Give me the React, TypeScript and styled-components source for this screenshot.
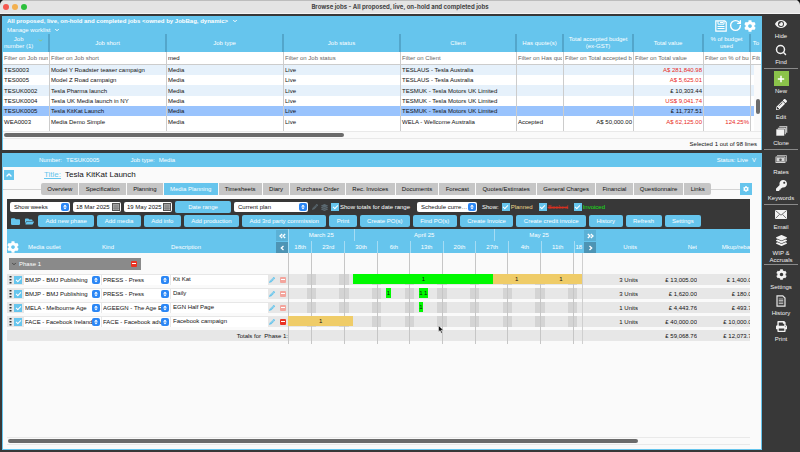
import React from "react";
import styled, { createGlobalStyle, css } from "styled-components";
import { RotateCw, Search, ChevronDown, ChevronUp } from "lucide-react";
import { FaCog, FaEye, FaPencilAlt, FaKey, FaLayerGroup, FaPrint, FaFolder, FaFolderOpen, FaSort } from "react-icons/fa";

const sky = "#66c5ed";
const dark = "#383838";

const GlobalStyle = createGlobalStyle`
  * { box-sizing: border-box; }
  html, body { margin: 0; padding: 0; }
  body { background: #111; color: #111; font: 6px/8px "Liberation Sans", Arial, sans-serif; }
  button, input, select { font: inherit; color: inherit; margin: 0; }
  svg { display: block; flex: none; }
`;

const Window = styled.div`
  min-height: 100vh;
  display: flex;
  flex-direction: column;
  background: ${dark};
  border-radius: 5px 5px 0 0;
  overflow: hidden;
`;

const TitleBar = styled.header`
  height: 14px;
  display: grid;
  grid-template-columns: 40px 1fr 40px;
  align-items: center;
  background: #e4e4e4;
  border-top: 1px solid #bdbdbd;
  border-bottom: 1px solid #f4f4f4;
  h1 {
    margin: 0;
    text-align: center;
    color: #444;
    font: 700 6px/10px Inter, sans-serif;
  }
`;

const Lights = styled.div`
  display: flex;
  gap: 3px;
  padding-left: 3px;
`;

const Light = styled.i<{ $color: string }>`
  width: 6px;
  height: 6px;
  border-radius: 50%;
  background: ${(p) => p.$color};
`;

const Body = styled.div`
  flex: 1;
  display: flex;
  padding: 2px;
`;

const Main = styled.main`
  flex: 1;
  min-width: 0;
  display: flex;
  flex-direction: column;
  gap: 3px;
`;

const Panel = styled.section<{ $grow?: boolean }>`
  background: #fafafa;
  border: solid ${sky};
  border-width: 0 1px;
  display: flex;
  flex-direction: column;
  ${(p) => p.$grow && css`flex: 1; border-bottom-width: 1px;`}
`;

/* Job browser */

const BrowserHead = styled.div`
  height: 18px;
  display: flex;
  justify-content: space-between;
  background: ${sky};
  color: #fff;
  padding: 1px 5px 0 4px;
`;

const HeadMenus = styled.div`
  display: flex;
  flex-direction: column;
  align-items: flex-start;
`;

const MenuButton = styled.button<{ $bold?: boolean }>`
  display: flex;
  align-items: center;
  gap: 4px;
  height: 9px;
  padding: 0;
  border: 0;
  background: none;
  color: #fff;
  white-space: nowrap;
  font-weight: ${(p) => (p.$bold ? 700 : 400)};
`;

const HeadTools = styled.div`
  display: flex;
  gap: 2px;
`;

const IconButton = styled.button`
  display: flex;
  align-items: center;
  justify-content: center;
  padding: 0;
  border: 0;
  background: none;
  color: #fff;
`;

const TableWrap = styled.div`
  position: relative;
  overflow: hidden;
  flex: none;
`;

const JobTable = styled.table`
  width: 100%;
  table-layout: fixed;
  border-collapse: separate;
  border-spacing: 0;
  th, td {
    padding: 0 1px;
    overflow: hidden;
    white-space: nowrap;
    border-right: 1px solid #ccc;
  }
  td:last-child, th:last-child { border-right: 0; }
`;

const HeadCell = styled.th`
  && { border-right: 2px solid #53a6cb; white-space: normal; }
  &&:last-child { border-right: 0; }
  height: 18px;
  background: ${sky};
  color: #fff;
  font-weight: 400;
  line-height: 7px;
`;

const SortLabel = styled.span`
  display: flex;
  align-items: flex-start;
  justify-content: space-between;
  padding-right: 4px;
  white-space: pre-line;
  svg { color: #9fc65a; margin-top: 2px; }
`;

const FilterCell = styled.td`
  height: 13px;
  background: #fff;
  border-bottom: 1px solid #ccc;
`;

const FilterInput = styled.input`
  display: block;
  width: 100%;
  height: 10px;
  padding: 0;
  border: 0;
  background: none;
  outline: 0;
  &::placeholder { color: #666; opacity: 1; }
`;

const JobRow = styled.tr<{ $selected?: boolean }>`
  height: 10px;
  background: #fff;
  &:nth-child(odd) { background: #e6f1fb; }
  &:nth-child(3n) { height: 11px; }
  ${(p) => p.$selected && css`&&& { background: #99c3fd; }`}
`;

const BlankRow = styled.tr`
  height: 4px;
  background: #fff;
`;

const JobCell = styled.td<{ $right?: boolean; $red?: boolean }>`
  text-align: ${(p) => (p.$right ? "right" : "left")};
  color: ${(p) => (p.$red ? "#e8291c" : "#111")};
`;

const VScroll = styled.div`
  position: absolute;
  top: 31px;
  right: 0;
  bottom: 0;
  width: 7px;
  background: #fafafa;
  padding: 34px 1px 0 2px;
  &::after {
    content: "";
    display: block;
    height: 15px;
    border-radius: 2px;
    background: #6b6b6b;
  }
`;

const HScroll = styled.div<{ $part: number }>`
  height: 8px;
  flex: none;
  padding: 1px;
  border: solid #e9e9e9;
  border-width: 1px 0;
  &::after {
    content: "";
    display: block;
    width: ${(p) => p.$part}%;
    height: 4px;
    border-radius: 2px;
    background: #6b6b6b;
  }
`;

const SelectionInfo = styled.div`
  height: 11px;
  padding: 1px 4px 0 0;
  text-align: right;
`;

/* Job detail */

const JobBar = styled.div`
  height: 14px;
  display: flex;
  align-items: center;
  gap: 31px;
  padding: 0 5px 0 36px;
  background: ${sky};
  color: #fff;
  flex: none;
`;

const Pair = styled.span<{ $end?: boolean }>`
  display: flex;
  gap: 4px;
  margin-left: ${(p) => (p.$end ? "auto" : "0")};
`;

const TitleRow = styled.div`
  height: 16px;
  display: flex;
  align-items: center;
  gap: 4px;
  padding-left: 1px;
  font-size: 8px;
  a { color: ${sky}; margin-left: 26px; }
`;

const SkyButton = styled.button<{ $size: number }>`
  width: ${(p) => p.$size}px;
  height: ${(p) => p.$size}px;
  display: flex;
  align-items: center;
  justify-content: center;
  padding: 0;
  border: 0;
  background: ${sky};
  color: #fff;
`;

const TabBar = styled.nav`
  display: flex;
  align-items: center;
  padding-right: 9px;
  flex: none;
`;

const Rule = styled.i<{ $width: number }>`
  flex: 0 0 ${(p) => p.$width}px;
  height: 1px;
  background: #d4d4d4;
`;

const Tabs = styled.div`
  flex: 1;
  display: flex;
  gap: 1px;
  border-radius: 2px;
  overflow: hidden;
`;

const Tab = styled.button<{ $active?: boolean }>`
  flex: 1 1 auto;
  height: 12px;
  padding: 0;
  border: 0;
  background: ${(p) => (p.$active ? sky : "#c6c6c6")};
  color: ${(p) => (p.$active ? "#fff" : "#111")};
  white-space: nowrap;
`;

const Plan = styled.div`
  flex: 1;
  display: flex;
  flex-direction: column;
  margin: 4px 11px 4px 4px;
  overflow: hidden;
`;

const Toolbar = styled.div`
  display: flex;
  flex-direction: column;
  gap: 2px;
  padding: 2px 3px;
  background: ${dark};
  color: #fff;
`;

const ToolRow = styled.div`
  display: flex;
  align-items: center;
  gap: 3px;
  height: 12px;
`;

const ActionRow = styled.div`
  display: flex;
  align-items: center;
  gap: 3px;
  padding-right: 46px;
`;

const FolderButton = styled(IconButton)`
  width: 11px;
  color: ${sky};
`;

const ActionButton = styled.button<{ $width?: number }>`
  flex: ${(p) => (p.$width ? `0 0 ${p.$width}px` : "1 1 auto")};
  height: 12px;
  padding: 0;
  border: 0;
  border-radius: 2px;
  background: ${sky};
  color: #fff;
  white-space: nowrap;
`;

const Picker = styled.span<{ $width: number }>`
  position: relative;
  flex: 0 0 ${(p) => p.$width}px;
  height: 10px;
  select, input {
    display: block;
    width: 100%;
    height: 10px;
    padding: 0 9px 0 4px;
    border: 0;
    border-radius: 2px;
    outline: 0;
    background: #fff;
    color: #111;
    appearance: none;
    text-overflow: ellipsis;
  }
  input { padding-left: 3px; }
`;

const Stepper = styled.i`
  position: absolute;
  top: 1px;
  right: 1px;
  width: 8px;
  height: 8px;
  display: flex;
  align-items: center;
  justify-content: center;
  border-radius: 2px;
  background: #2a86f5;
  color: #fff;
  pointer-events: none;
`;

const DateIcon = styled.i`
  position: absolute;
  top: 1px;
  right: 1px;
`;

const Check = styled.input`
  appearance: none;
  display: flex;
  flex: none;
  width: 8px;
  height: 8px;
  background: ${sky};
  &:checked::after {
    content: "";
    width: 2px;
    height: 4px;
    margin: 1px auto;
    border: solid #fff;
    border-width: 0 1px 1px 0;
    transform: rotate(45deg);
  }
`;

const CheckLabel = styled.label<{ $color?: string; $struck?: boolean; $width: number }>`
  display: flex;
  align-items: center;
  gap: 1px;
  flex: 0 0 ${(p) => p.$width}px;
  white-space: nowrap;
  color: ${(p) => p.$color || "#fff"};
  text-decoration: ${(p) => (p.$struck ? "line-through" : "none")};
`;

const ShowLabel = styled.span`
  margin-left: 2px;
`;

const Dim = styled(IconButton)`
  width: 7px;
  color: #5a6870;
`;

/* Schedule */

const Schedule = styled.div`
  position: relative;
  flex: 1;
`;

const PlanTable = styled.table`
  width: 100%;
  table-layout: fixed;
  border-collapse: separate;
  border-spacing: 0;
  th, td { padding: 0; white-space: nowrap; overflow: hidden; }
`;

const PlanHead = styled.th`
  height: 24px;
  background: ${sky};
  color: #fff;
  font-weight: 400;
  text-align: left;
  vertical-align: bottom;
`;

const HeadText = styled.span<{ $end?: boolean; $inset?: boolean; $overrun?: boolean }>`
  display: flex;
  align-items: center;
  justify-content: ${(p) => (p.$end ? "flex-end" : "flex-start")};
  height: 12px;
  padding-left: ${(p) => (p.$inset ? 4 : 0)}px;
  margin-right: ${(p) => (p.$overrun ? -5 : 0)}px;
`;

const UnitsHead = styled.div`
  display: flex;
  justify-content: space-between;
  align-items: flex-end;
  padding: 0 1px;
`;

const Pager = styled.div<{ $left?: boolean }>`
  display: flex;
  flex-direction: column;
  gap: 1px;
  width: 12px;
  margin-left: ${(p) => (p.$left ? "0" : "auto")};
`;

const PagerButton = styled.button<{ $deep?: boolean }>`
  height: 11px;
  padding: 0;
  border: 0;
  display: flex;
  align-items: center;
  justify-content: center;
  background: ${(p) => (p.$deep ? "#4d94b4" : "#5bb1d6")};
  color: #fff;
`;

const Track = styled.div<{ $height: number }>`
  display: grid;
  grid-template-columns: repeat(63, 1fr);
  height: ${(p) => p.$height}px;
  border-right: 1px solid #cfcfcf;
`;

const Scale = styled.div`
  display: grid;
  grid-template-columns: repeat(63, 1fr);
  grid-template-rows: 12px 12px;
`;

const ScaleCell = styled.span<{ $from: number; $days: number; $row: number }>`
  grid-row: ${(p) => p.$row};
  grid-column: ${(p) => p.$from + 1} / span ${(p) => p.$days};
  display: flex;
  align-items: center;
  justify-content: center;
  min-width: 0;
  border-left: 1px solid #a5dcf4;
`;

const Weekend = styled.i<{ $from: number; $days: number }>`
  grid-row: 1;
  grid-column: ${(p) => p.$from + 1} / span ${(p) => p.$days};
  height: 11px;
  background: #d4d4d4;
`;

const WeekLine = styled.i<{ $from: number }>`
  grid-row: 1;
  grid-column: ${(p) => p.$from + 1};
  border-left: 1px solid #c6c6c6;
`;

const Bar = styled.span<{ $from: number; $days: number; $color: string }>`
  grid-row: 1;
  grid-column: ${(p) => p.$from + 1} / span ${(p) => p.$days};
  height: 10px;
  display: flex;
  align-items: center;
  justify-content: center;
  min-width: 0;
  background: ${(p) => p.$color};
  color: #111;
  z-index: 1;
`;

const PlanRow = styled.tr`
  td {
    height: 14px;
    vertical-align: top;
    background: linear-gradient(#e7e7e7 11px, #fafafa 11px);
  }
`;

const Slot = styled.div<{ $end?: boolean }>`
  display: flex;
  align-items: center;
  justify-content: ${(p) => (p.$end ? "flex-end" : "flex-start")};
  gap: 2px;
  height: 11px;
`;

const Overrun = styled(Slot)`
  margin-right: -5px;
`;

const CellPicker = styled.span`
  position: relative;
  display: block;
  width: 100%;
  margin-right: 1px;
  select {
    display: block;
    width: 100%;
    height: 10px;
    padding: 0 8px 0 1px;
    border: 0;
    outline: 0;
    border-radius: 0;
    background: #fff;
    color: #111;
    appearance: none;
    overflow: hidden;
  }
`;

const DescInput = styled.input`
  width: 100%;
  height: 10px;
  padding: 0 2px 1px;
  border: 0;
  outline: 0;
  background: #fff;
`;

const RowIcon = styled(IconButton)<{ $color: string }>`
  width: 8px;
  color: ${(p) => p.$color};
`;

const Handle = styled(Slot)`
  padding-left: 2px;
`;

const Actions = styled(Slot)`
  gap: 4px;
`;

const Remove = styled.button<{ $faded?: boolean }>`
  width: 6px;
  height: 6px;
  padding: 0 1px;
  border: 0;
  border-radius: 1px;
  background: ${(p) => (p.$faded ? "#f3a59d" : "#ea3323")};
  &::after {
    content: "";
    display: block;
    height: 1px;
    background: #fff;
  }
`;

const PhaseCell = styled.td`
  height: 21px;
`;

const Phase = styled.div`
  display: flex;
  align-items: center;
  gap: 2px;
  width: 132px;
  height: 12px;
  margin-left: 2px;
  padding: 0 4px 0 2px;
  background: #8a8a8a;
  color: #fff;
  ${Remove} { margin-left: auto; }
`;

const Pointer = styled.svg`
  position: absolute;
  left: 58%;
  top: 96px;
  z-index: 2;
`;

/* Side rail */

const Rail = styled.aside`
  flex: 0 0 36px;
  display: flex;
  flex-direction: column;
  color: #f2f2f2;
`;

const RailGroup = styled.div`
  display: flex;
  flex-direction: column;
  margin: 0 0 0 2px;
  & + & { border-top: 1px solid #8a8a8a; padding-top: 2px; }
`;

const RailButton = styled.button`
  display: flex;
  flex-direction: column;
  align-items: center;
  min-height: 26px;
  padding: 0;
  border: 0;
  background: none;
  color: #f2f2f2;
  line-height: 7px;
`;

const RailIcon = styled.span<{ $green?: boolean }>`
  width: 15px;
  height: 15px;
  margin-bottom: 2px;
  display: flex;
  align-items: center;
  justify-content: center;
  background: ${(p) => (p.$green ? "#8bc34a" : "none")};
`;

const SaveIcon = () => (
  <svg width="12" height="12" viewBox="0 0 12 12" fill="none" stroke="currentColor">
    <path d="M.8.8h9l1.400 1.400v9H.8z" strokeWidth="1.200" />
    <path d="M3 1v3.200h6V1M2.500 6.500h7M2.500 8.500h7M5 2.500h3" />
  </svg>
);

const CloneIcon = () => (
  <svg width="13" height="12" viewBox="0 0 13 12" fill="currentColor" stroke={dark} strokeWidth=".6">
    <rect x="4" y="1" width="8.500" height="7" />
    <rect x="2.500" y="2.500" width="8.500" height="7" />
    <rect x="1" y="4" width="8.500" height="7" />
  </svg>
);

const RatesIcon = () => (
  <svg width="12" height="9" viewBox="0 0 12 9">
    <path d="M2 .5h9.500v6" fill="none" stroke="#aaa" />
    <rect x=".5" y="1.500" width="10" height="6.500" rx=".5" fill="#d6d6d6" />
    <rect x="1.500" y="2.700" width="8" height="4" fill="none" stroke="#777" strokeWidth=".6" />
    <circle cx="5.500" cy="4.700" r="1.300" fill="#555" />
  </svg>
);

const MailIcon = () => (
  <svg width="12" height="9" viewBox="0 0 12 9">
    <rect width="12" height="9" rx=".6" fill="#f2f2f2" />
    <path d="M.6.7 6 5.200 11.400.7M.6 8.400l3.900-4M11.400 8.400l-3.900-4" fill="none" stroke="#555" strokeWidth=".8" />
  </svg>
);

const DocIcon = () => (
  <svg width="10" height="12" viewBox="0 0 10 12">
    <path d="M1 .8h5.800L9 3v8.200H1z" fill="#444" stroke="#e6e6e6" strokeWidth="1.200" />
    <path d="M2.800 4h4.400M2.800 5.500h4.400M2.800 7h4.400M2.800 8.500h4.400" stroke="#bbb" strokeWidth=".9" />
  </svg>
);

const PlusIcon = () => (
  <svg width="8" height="8" viewBox="0 0 8 8">
    <path d="M4 .8v6.400M.8 4h6.400" stroke="#fff" strokeWidth="1.500" />
  </svg>
);

const CalendarIcon = () => (
  <svg width="8" height="8" viewBox="0 0 8 8">
    <rect x=".5" y=".5" width="7" height="7" fill="#bbb" stroke="#555" />
    <path d="M1 2h6M1 4h6M1 5.700h6M3 2v5M5 2v5" stroke="#666" strokeWidth=".6" />
  </svg>
);

const GripIcon = () => (
  <svg width="3" height="8" viewBox="0 0 3 8" fill="#333">
    <rect x=".5" width="2" height="1.500" />
    <rect x=".5" y="3" width="2" height="1.500" />
    <rect x=".5" y="6" width="2" height="1.500" />
  </svg>
);

const Chevrons = ({ count, back }: { count: number; back?: boolean }) => (
  <svg width="7" height="6" viewBox="0 0 7 6" fill="none" stroke="#fff" strokeWidth="1.300">
    <g transform={back ? "rotate(180 3.500 3)" : undefined}>
      {count === 2 ? <path d="M.8 1 3 3 .8 5M3.800 1 6 3 3.800 5" /> : <path d="M2.500 1l2.200 2-2.200 2" />}
    </g>
  </svg>
);

const columns: { label: string; filter: string; width?: number; value?: string }[] = [
  { label: "Job\nnumber (1)", filter: "Filter on Job number", width: 47 },
  { label: "Job short", filter: "Filter on Job short", width: 117 },
  { label: "Job type", filter: "Filter on Job type", width: 117, value: "med" },
  { label: "Job status", filter: "Filter on Job status", width: 117 },
  { label: "Client", filter: "Filter on Client" },
  { label: "Has quote(s)", filter: "Filter on Has quote(s)", width: 47 },
  { label: "Total accepted budget (ex-GST)", filter: "Filter on Total accepted budget", width: 70 },
  { label: "Total value", filter: "Filter on Total value", width: 70 },
  { label: "% of budget used", filter: "Filter on % of budget used", width: 47 },
  { label: "To", filter: "Filter on To", width: 10 },
];

const jobs = [
  ["TES0003", "Model Y Roadster teaser campaign", "TESLAUS - Tesla Australia", "", "", "A$ 281,840.98", ""],
  ["TES0005", "Model Z Road campaign", "TESLAUS - Tesla Australia", "", "", "A$ 5,625.01", ""],
  ["TESUK0002", "Tesla Pharma launch", "TESMUK - Tesla Motors UK Limited", "", "", "£ 10,303.44", ""],
  ["TESUK0004", "Tesla UK Media launch in NY", "TESMUK - Tesla Motors UK Limited", "", "", "US$ 9,041.74", ""],
  ["TESUK0005", "Tesla KitKat Launch", "TESMUK - Tesla Motors UK Limited", "", "", "£ 11,737.51", ""],
  ["WEA0003", "Media Demo Simple", "WELA - Wellcome Australia", "Accepted", "A$ 50,000.00", "A$ 62,125.00", "124.25%"],
];

const tabs = [
  "Overview", "Specification", "Planning", "Media Planning", "Timesheets", "Diary", "Purchase Order",
  "Rec. Invoices", "Documents", "Forecast", "Quotes/Estimates", "General Charges", "Financial",
  "Questionnaire", "Links",
];

const actions = [
  "Add new phase", "Add media", "Add info", "Add production", "Add 3rd party commission", "Print",
  "Create PO(s)", "Find PO(s)", "Create Invoice", "Create credit invoice", "History", "Refresh", "Settings",
];

const months = [
  { label: "March 25", from: 0, days: 14 },
  { label: "April 25", from: 14, days: 30 },
  { label: "May 25", from: 44, days: 19 },
];

const weeks = [
  { label: "18th", from: 0, days: 5 },
  { label: "23rd", from: 5, days: 7 },
  { label: "30th", from: 12, days: 7 },
  { label: "6th", from: 19, days: 7 },
  { label: "13th", from: 26, days: 7 },
  { label: "20th", from: 33, days: 7 },
  { label: "27th", from: 40, days: 7 },
  { label: "4th", from: 47, days: 7 },
  { label: "11th", from: 54, days: 7 },
  { label: "18", from: 61, days: 2 },
];

const green = "#00f900";
const amber = "#efcc68";

const lines = [
  {
    outlet: "BMJP - BMJ Publishing", kind: "PRESS - Press", text: "Kit Kat", units: "3 Units",
    net: "£ 13,005.00", markup: "£ 1,400.00", faded: true,
    bars: [[14, 30, green], [44, 10, amber], [54, 9, amber]],
  },
  {
    outlet: "BMJP - BMJ Publishing", kind: "PRESS - Press", text: "Daily", units: "3 Units",
    net: "£ 1,620.00", markup: "£ 180.00", faded: true,
    bars: [[21, 1, green], [28, 1, green], [29, 1, green]],
  },
  {
    outlet: "MELA - Melbourne Age", kind: "AGEEGN - The Age EGN", text: "EGN Half Page", units: "1 Units",
    net: "£ 4,443.76", markup: "£ 493.75", faded: true,
    bars: [[28, 1, green]],
  },
  {
    outlet: "FACE - Facebook Ireland", kind: "FACE - Facebook advert", text: "Facebook campaign", units: "1 Units",
    net: "£ 40,000.00", markup: "£ 10,000.00", faded: false,
    bars: [[0, 14, amber]],
  },
] as const;

const Timeline = ({ bars = [], shaded, height = 14 }: { bars?: readonly (readonly [number, number, string])[]; shaded?: boolean; height?: number }) => (
  <Track $height={height}>
    {shaded && weeks.slice(1).map((w) => <Weekend key={w.from} $from={w.from - 1} $days={2} />)}
    {weeks.map((w) => <WeekLine key={w.from} $from={w.from} />)}
    {bars.map(([from, days, color]) => (
      <Bar key={from} $from={from} $days={days} $color={color}>1</Bar>
    ))}
  </Track>
);

const Browser = () => (
  <Panel>
    <BrowserHead>
      <HeadMenus>
        <MenuButton $bold>
          All proposed, live, on-hold and completed jobs &lt;owned by JobBag, dynamic&gt;
          <ChevronDown size={6} strokeWidth={4} />
        </MenuButton>
        <MenuButton>
          Manage worklist
          <ChevronDown size={6} strokeWidth={4} />
        </MenuButton>
      </HeadMenus>
      <HeadTools>
        <IconButton aria-label="Save"><SaveIcon /></IconButton>
        <IconButton aria-label="Reload"><RotateCw size={13} strokeWidth={2.5} /></IconButton>
        <IconButton aria-label="Worklist settings"><FaCog size={12} /></IconButton>
      </HeadTools>
    </BrowserHead>
    <TableWrap>
      <JobTable>
        <colgroup>
          {columns.map((c) => <col key={c.label} width={c.width} />)}
        </colgroup>
        <thead>
          <tr>
            {columns.map((c, i) => (
              <HeadCell key={c.label}>
                {i === 0 ? <SortLabel><span>{c.label}</span><ChevronDown size={5} strokeWidth={4} /></SortLabel> : c.label}
              </HeadCell>
            ))}
          </tr>
          <tr>
            {columns.map((c) => (
              <FilterCell key={c.label}>
                <FilterInput aria-label={c.filter} placeholder={c.filter} defaultValue={c.value} />
              </FilterCell>
            ))}
          </tr>
        </thead>
        <tbody>
          {jobs.map(([no, short, client, quotes, budget, total, used]) => (
            <JobRow key={no} $selected={no === "TESUK0005"}>
              <JobCell>{no}</JobCell>
              <JobCell>{short}</JobCell>
              <JobCell>Media</JobCell>
              <JobCell>Live</JobCell>
              <JobCell>{client}</JobCell>
              <JobCell>{quotes}</JobCell>
              <JobCell $right>{budget}</JobCell>
              <JobCell $right $red={!total.startsWith("£")}>{total}</JobCell>
              <JobCell $right $red>{used}</JobCell>
              <JobCell />
            </JobRow>
          ))}
          <BlankRow>{columns.map((c) => <td key={c.label} />)}</BlankRow>
        </tbody>
      </JobTable>
      <VScroll />
    </TableWrap>
    <HScroll $part={45} />
    <SelectionInfo>Selected 1 out of 98 lines</SelectionInfo>
  </Panel>
);

const Select = ({ width, label, value }: { width: number; label: string; value: string }) => (
  <Picker $width={width}>
    <select aria-label={label}><option>{value}</option></select>
    <Stepper><FaSort size={6} /></Stepper>
  </Picker>
);

const DateField = ({ label, value }: { label: string; value: string }) => (
  <Picker $width={48}>
    <input aria-label={label} defaultValue={value} />
    <DateIcon><CalendarIcon /></DateIcon>
  </Picker>
);

const CellSelect = ({ label, value }: { label: string; value: string }) => (
  <CellPicker>
    <select aria-label={label}><option>{value}</option></select>
    <Stepper><FaSort size={6} /></Stepper>
  </CellPicker>
);

const PlanToolbar = () => (
  <Toolbar>
    <ToolRow>
      <Select width={60} label="Scale" value="Show weeks" />
      <DateField label="From" value="18 Mar 2025" />
      <DateField label="To" value="19 May 2025" />
      <ActionButton $width={56}>Date range</ActionButton>
      <Select width={74} label="Plan" value="Current plan" />
      <Dim aria-label="Edit plan"><FaPencilAlt size={6} /></Dim>
      <Dim aria-label="Plan layers"><FaLayerGroup size={7} /></Dim>
      <CheckLabel $width={83}><Check type="checkbox" defaultChecked />Show totals for date range</CheckLabel>
      <Select width={60} label="Currency" value="Schedule currency" />
      <ShowLabel>Show:</ShowLabel>
      <CheckLabel $width={34} $color="#efd58c"><Check type="checkbox" defaultChecked />Planned</CheckLabel>
      <CheckLabel $width={32} $color="#d8301f" $struck><Check type="checkbox" defaultChecked />Booked</CheckLabel>
      <CheckLabel $width={34} $color="#16e016"><Check type="checkbox" defaultChecked />Invoiced</CheckLabel>
    </ToolRow>
    <ActionRow>
      <FolderButton aria-label="Close folders"><FaFolder size={9} /></FolderButton>
      <FolderButton aria-label="Open folders"><FaFolderOpen size={9} /></FolderButton>
      {actions.map((a) => <ActionButton key={a}>{a}</ActionButton>)}
    </ActionRow>
  </Toolbar>
);

const PlanSchedule = () => (
  <Schedule>
    <PlanTable>
      <colgroup>
        <col width={17} />
        <col width={78} />
        <col width={69} />
        <col width={97} />
        <col width={20} />
        <col />
        <col width={55} />
        <col width={59} />
        <col width={53} />
      </colgroup>
      <thead>
        <tr>
          <PlanHead><IconButton aria-label="Schedule settings"><FaCog size={12} /></IconButton></PlanHead>
          <PlanHead><HeadText $inset>Media outlet</HeadText></PlanHead>
          <PlanHead><HeadText>Kind</HeadText></PlanHead>
          <PlanHead><HeadText>Description</HeadText></PlanHead>
          <PlanHead>
            <Pager>
              <PagerButton aria-label="First weeks"><Chevrons count={2} back /></PagerButton>
              <PagerButton $deep aria-label="Earlier weeks"><Chevrons count={1} back /></PagerButton>
            </Pager>
          </PlanHead>
          <PlanHead>
            <Scale>
              {months.map((m) => <ScaleCell key={m.label} $row={1} $from={m.from} $days={m.days}>{m.label}</ScaleCell>)}
              {weeks.map((w) => <ScaleCell key={w.label} $row={2} $from={w.from} $days={w.days}>{w.label}</ScaleCell>)}
            </Scale>
          </PlanHead>
          <PlanHead>
            <UnitsHead>
              <Pager $left>
                <PagerButton aria-label="Last weeks"><Chevrons count={2} /></PagerButton>
                <PagerButton $deep aria-label="Later weeks"><Chevrons count={1} /></PagerButton>
              </Pager>
              <HeadText>Units</HeadText>
            </UnitsHead>
          </PlanHead>
          <PlanHead><HeadText $end>Net</HeadText></PlanHead>
          <PlanHead><HeadText $end $overrun>Mkup/rebate</HeadText></PlanHead>
        </tr>
      </thead>
      <tbody>
        <tr>
          <PhaseCell colSpan={5}>
            <Phase>
              <ChevronDown size={6} strokeWidth={3} color="#333" />
              Phase 1
              <Remove aria-label="Remove phase" />
            </Phase>
          </PhaseCell>
          <td><Timeline height={21} /></td>
          <td colSpan={3} />
        </tr>
        {lines.map((l) => (
          <PlanRow key={l.text}>
            <td>
              <Handle>
                <GripIcon />
                <Check type="checkbox" defaultChecked aria-label={`Select ${l.text}`} />
              </Handle>
            </td>
            <td><Slot><CellSelect label="Media outlet" value={l.outlet} /></Slot></td>
            <td><Slot><CellSelect label="Kind" value={l.kind} /></Slot></td>
            <td><Slot><DescInput aria-label="Description" defaultValue={l.text} /></Slot></td>
            <td>
              <Actions>
                <RowIcon $color={sky} aria-label="Edit line"><FaPencilAlt size={6} /></RowIcon>
                <Remove $faded={l.faded} aria-label="Remove line" />
              </Actions>
            </td>
            <td><Timeline shaded bars={l.bars} /></td>
            <td><Slot $end>{l.units}</Slot></td>
            <td><Slot $end>{l.net}</Slot></td>
            <td><Overrun $end>{l.markup}</Overrun></td>
          </PlanRow>
        ))}
        <PlanRow>
          <td colSpan={5}><Slot $end>Totals for&nbsp; Phase 1:</Slot></td>
          <td><Timeline /></td>
          <td />
          <td><Slot $end>£ 59,068.76</Slot></td>
          <td><Overrun $end>£ 12,073.75</Overrun></td>
        </PlanRow>
      </tbody>
    </PlanTable>
    <Pointer width="6" height="9" viewBox="0 0 6 9">
      <path d="M.5.5v6.500l1.600-1.400 1.100 2.600 1.200-.5-1.100-2.500h2.200z" fill="#111" stroke="#fff" strokeWidth=".5" />
    </Pointer>
  </Schedule>
);

const Detail = () => (
  <Panel $grow>
    <JobBar>
      <Pair><span>Number:</span><span>TESUK0005</span></Pair>
      <Pair><span>Job type:</span><span>Media</span></Pair>
      <Pair $end><span>Status: Live</span><span>V</span></Pair>
    </JobBar>
    <TitleRow>
      <SkyButton $size={10} aria-label="Collapse"><ChevronUp size={8} strokeWidth={4} /></SkyButton>
      <a href="#title">Title:</a>
      <span>Tesla KitKat Launch</span>
    </TitleRow>
    <TabBar>
      <Rule $width={38} />
      <Tabs>
        {tabs.map((t) => <Tab key={t} $active={t === "Media Planning"}>{t}</Tab>)}
      </Tabs>
      <Rule $width={29} />
      <SkyButton $size={12} aria-label="Tab settings"><FaCog size={6} /></SkyButton>
    </TabBar>
    <Plan>
      <PlanToolbar />
      <PlanSchedule />
      <HScroll $part={85} />
    </Plan>
  </Panel>
);

const rail = [
  [
    { label: "Hide", icon: <FaEye size={12} /> },
    { label: "Find", icon: <Search size={12} strokeWidth={3} /> },
  ],
  [
    { label: "New", icon: <PlusIcon />, green: true },
    { label: "Edit", icon: <FaPencilAlt size={11} /> },
    { label: "Clone", icon: <CloneIcon /> },
  ],
  [
    { label: "Rates", icon: <RatesIcon /> },
    { label: "Keywords", icon: <FaKey size={11} /> },
  ],
  [
    { label: "Email", icon: <MailIcon /> },
    { label: "WIP & Accruals", icon: <FaLayerGroup size={11} /> },
  ],
  [
    { label: "Settings", icon: <FaCog size={11} /> },
    { label: "History", icon: <DocIcon /> },
    { label: "Print", icon: <FaPrint size={11} /> },
  ],
];

export default function App() {
  return (
    <Window>
      <GlobalStyle />
      <TitleBar>
        <Lights>
          <Light $color="#f5584f" />
          <Light $color="#f3b04f" />
          <Light $color="#2cc03c" />
        </Lights>
        <h1>Browse jobs - All proposed, live, on-hold and completed jobs</h1>
      </TitleBar>
      <Body>
        <Main>
          <Browser />
          <Detail />
        </Main>
        <Rail>
          {rail.map((group) => (
            <RailGroup key={group[0].label}>
              {group.map((item) => (
                <RailButton key={item.label}>
                  <RailIcon $green={"green" in item}>{item.icon}</RailIcon>
                  {item.label}
                </RailButton>
              ))}
            </RailGroup>
          ))}
        </Rail>
      </Body>
    </Window>
  );
}
